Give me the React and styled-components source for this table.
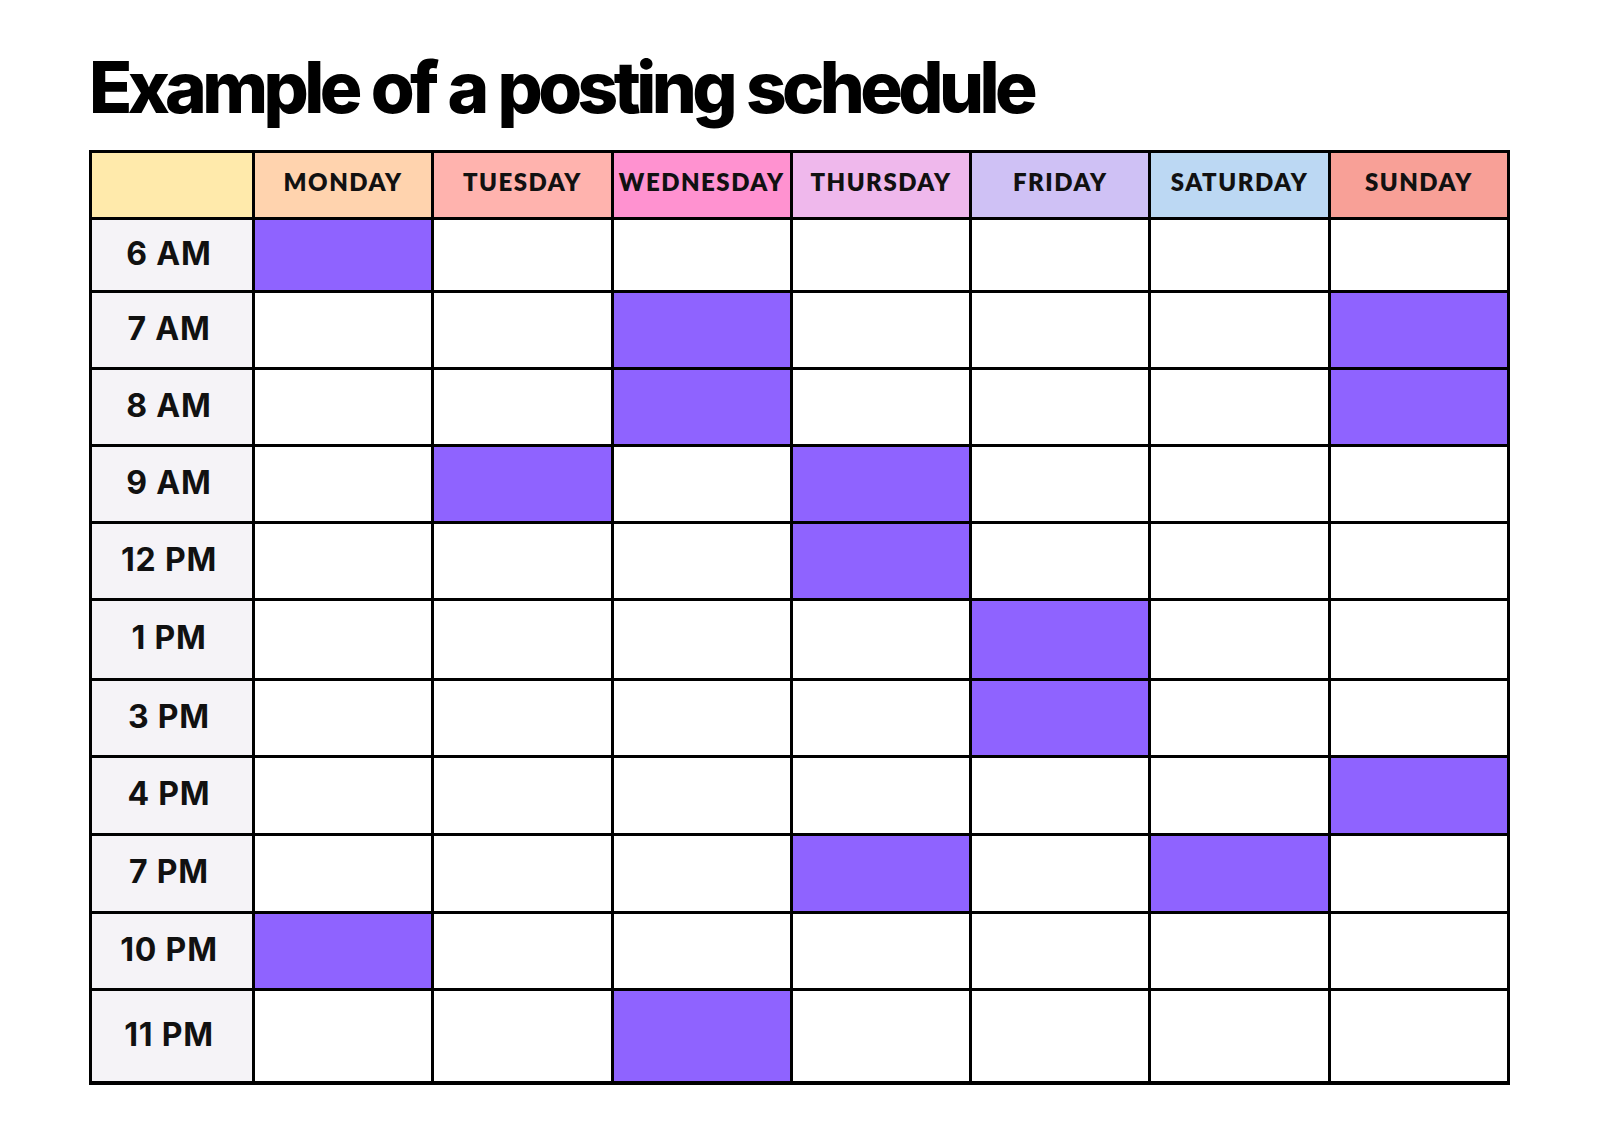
import styled, { createGlobalStyle } from "styled-components";

const GlobalStyle = createGlobalStyle`
  html, body {
    margin: 0;
    padding: 0;
    background: #fff;
  }
`;

const Page = styled.div`
  width: 1600px;
  height: 1131px;
  box-sizing: border-box;
  padding: 44px 0 0 89px;
  background: #fff;
`;

const Title = styled.h1`
  margin: 0 0 20px 0;
  font-family: Inter, "Liberation Sans", sans-serif;
  font-weight: 800;
  font-size: 71px;
  line-height: 86px;
  letter-spacing: -4.6px;
  word-spacing: 2px;
  color: #000;
`;

const Grid = styled.div`
  display: grid;
  width: 1421px;
  box-sizing: border-box;
  grid-template-columns: 160px repeat(7, minmax(0, 1fr));
  grid-template-rows: ${(p) => p.$rows};
  gap: 3px;
  padding: 3px 3px 4px 3px;
  background: #000;
`;

const Corner = styled.div`
  background: #ffeaab;
`;

const DayHead = styled.div`
  display: flex;
  align-items: center;
  justify-content: center;
  padding-bottom: 7px;
  background: ${(p) => p.$bg};
  font-family: Lato, "Liberation Sans", sans-serif;
  font-weight: 800;
  font-size: 24px;
  letter-spacing: 1.5px;
  white-space: nowrap;
  color: #111;
`;

const TimeCell = styled.div`
  display: flex;
  align-items: center;
  justify-content: center;
  padding: 0 6px 4px 0;
  background: #f5f3f7;
  font-family: Inter, "Liberation Sans", sans-serif;
  font-weight: 700;
  font-size: 32px;
  letter-spacing: 0.8px;
  color: #111;
`;

const Slot = styled.div`
  background: ${(p) => (p.$on ? "#8f63ff" : "#fff")};
`;

const days = [
  { name: "MONDAY", bg: "#ffd3ae" },
  { name: "TUESDAY", bg: "#ffb3ae" },
  { name: "WEDNESDAY", bg: "#ff92d0" },
  { name: "THURSDAY", bg: "#efb8ec" },
  { name: "FRIDAY", bg: "#cfc1f5" },
  { name: "SATURDAY", bg: "#bcd8f3" },
  { name: "SUNDAY", bg: "#f8a097" },
];

// day index: 0 = Monday ... 6 = Sunday
const slots = [
  { time: "6 AM", h: 70, on: [0] },
  { time: "7 AM", h: 74, on: [2, 6] },
  { time: "8 AM", h: 74, on: [2, 6] },
  { time: "9 AM", h: 74, on: [1, 3] },
  { time: "12 PM", h: 74, on: [3] },
  { time: "1 PM", h: 77, on: [4] },
  { time: "3 PM", h: 74, on: [4] },
  { time: "4 PM", h: 75, on: [6] },
  { time: "7 PM", h: 75, on: [3, 5] },
  { time: "10 PM", h: 74, on: [0] },
  { time: "11 PM", h: 90, on: [2] },
];

export default function App() {
  const rows = ["64px", ...slots.map((s) => `${s.h}px`)].join(" ");

  return (
    <>
      <GlobalStyle />
      <Page>
        <Title>Example of a posting schedule</Title>
        <Grid $rows={rows}>
          <Corner />
          {days.map((d) => (
            <DayHead key={d.name} $bg={d.bg}>
              {d.name}
            </DayHead>
          ))}
          {slots.map((s) => (
            <>
              <TimeCell key={s.time}>{s.time}</TimeCell>
              {days.map((d, i) => (
                <Slot key={s.time + d.name} $on={s.on.includes(i)} />
              ))}
            </>
          ))}
        </Grid>
      </Page>
    </>
  );
}
